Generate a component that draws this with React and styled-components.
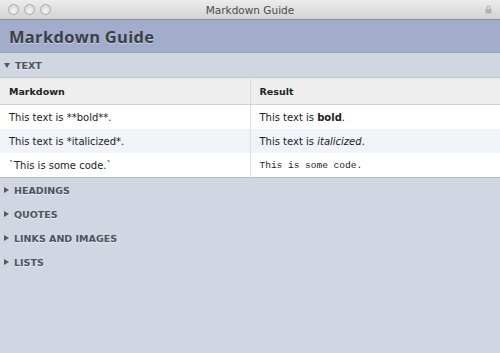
import React from "react";
import styled, { createGlobalStyle } from "styled-components";

const GlobalStyle = createGlobalStyle`
  html, body {
    margin: 0;
    padding: 0;
    background: #d0d7e3;
  }
  body {
    font-family: "DejaVu Sans", "Liberation Sans", sans-serif;
  }
`;

const Window = styled.div`
  width: 500px;
  height: 353px;
  display: flex;
  flex-direction: column;
  background: #d0d7e3;
  overflow: hidden;
`;

const TitleBar = styled.div`
  height: 19px;
  display: flex;
  align-items: center;
  padding: 0 8px;
  background: linear-gradient(#ececec, #d3d3d3);
  border-bottom: 1px solid #8f8f8f;
`;

const Side = styled.div`
  flex: 0 0 48px;
  display: flex;
  justify-content: ${(p) => (p.$end ? "flex-end" : "flex-start")};
  align-items: center;
  gap: 5px;
`;

const Light = styled.span`
  width: 11px;
  height: 11px;
  border-radius: 50%;
  box-sizing: border-box;
  border: 1px solid #a9a9a9;
  background: radial-gradient(circle at 50% 70%, #f4f4f4, #d2d2d2);
`;

const WindowTitle = styled.div`
  flex: 1;
  text-align: center;
  font-size: 10.5px;
  color: #4c4c4c;
`;

const Lock = styled.svg`
  width: 7px;
  height: 9px;
`;

const Header = styled.div`
  height: 32px;
  display: flex;
  align-items: center;
  padding: 0 9px;
  background: #a1adca;
  border-bottom: 1px solid #98a2bb;
`;

const HeaderTitle = styled.h1`
  margin: 0;
  font-family: "Open Sans", "DejaVu Sans", sans-serif;
  font-size: 16.5px;
  font-weight: 700;
  letter-spacing: 0.3px;
  color: #3b3e46;
  text-shadow: 0 1px 0 rgba(255, 255, 255, 0.45);
`;

const Section = styled.div`
  height: 24px;
  display: flex;
  align-items: center;
  gap: 3px;
  padding: 0 4px;
  font-size: 9.5px;
  font-weight: bold;
  color: #4f525a;
  text-shadow: 0 1px 0 rgba(255, 255, 255, 0.5);
`;

const Arrow = styled.span`
  display: inline-block;
  width: 0;
  height: 0;
  border-left: ${(p) => (p.$open ? "3px solid transparent" : "5px solid #55585f")};
  border-right: ${(p) => (p.$open ? "3px solid transparent" : "0")};
  border-top: ${(p) => (p.$open ? "5px solid #55585f" : "3px solid transparent")};
  border-bottom: ${(p) => (p.$open ? "0" : "3px solid transparent")};
  margin-right: 2px;
`;

const Table = styled.table`
  width: 100%;
  border-collapse: collapse;
  background: #fff;
  border-top: 1px solid #c3c6cc;
  border-bottom: 1px solid #b3b7bf;
  font-size: 10px;
  color: #222;
`;

const Th = styled.th`
  height: 26px;
  text-align: left;
  padding: 0 9px;
  font-weight: bold;
  font-size: 9.5px;
  background: #eeeeee;
  border-bottom: 1px solid #d3d3d3;
  border-right: ${(p) => (p.$first ? "1px solid #d8d8d8" : "0")};
`;

const Tr = styled.tr`
  background: ${(p) => (p.$alt ? "#f0f3f8" : "#ffffff")};
`;

const Td = styled.td`
  height: 24px;
  padding: 0 9px;
  width: 50%;
  border-right: ${(p) => (p.$first ? "1px solid #e0e0e0" : "0")};
  font-family: ${(p) => (p.$mono ? '"Liberation Mono", "DejaVu Sans Mono", monospace' : "inherit")};
  font-size: ${(p) => (p.$mono ? "9.5px" : "10px")};
`;

const rows = [
  { md: "This text is **bold**.", res: <>This text is <b>bold</b>.</> },
  { md: "This text is *italicized*.", res: <>This text is <i>italicized</i>.</> },
  { md: "`This is some code.`", res: "This is some code.", mono: true },
];

export default function App() {
  return (
    <>
      <GlobalStyle />
      <Window>
        <TitleBar>
          <Side>
            <Light />
            <Light />
            <Light />
          </Side>
          <WindowTitle>Markdown Guide</WindowTitle>
          <Side $end>
            <Lock viewBox="0 0 7 9">
              <path d="M1.8 4V2.7a1.7 1.7 0 0 1 3.4 0V4" fill="none" stroke="#b3b3b3" strokeWidth="1.1" />
              <rect x="0.5" y="4" width="6" height="4.5" rx="0.5" fill="#b3b3b3" />
            </Lock>
          </Side>
        </TitleBar>
        <Header>
          <HeaderTitle>Markdown Guide</HeaderTitle>
        </Header>
        <Section>
          <Arrow $open />
          TEXT
        </Section>
        <Table>
          <thead>
            <tr>
              <Th $first>Markdown</Th>
              <Th>Result</Th>
            </tr>
          </thead>
          <tbody>
            {rows.map((r, i) => (
              <Tr key={i} $alt={i === 1}>
                <Td $first>{r.md}</Td>
                <Td $mono={r.mono}>{r.res}</Td>
              </Tr>
            ))}
          </tbody>
        </Table>
        <div>
          {["HEADINGS", "QUOTES", "LINKS AND IMAGES", "LISTS"].map((s) => (
            <Section key={s}>
              <Arrow />
              {s}
            </Section>
          ))}
        </div>
      </Window>
    </>
  );
}
